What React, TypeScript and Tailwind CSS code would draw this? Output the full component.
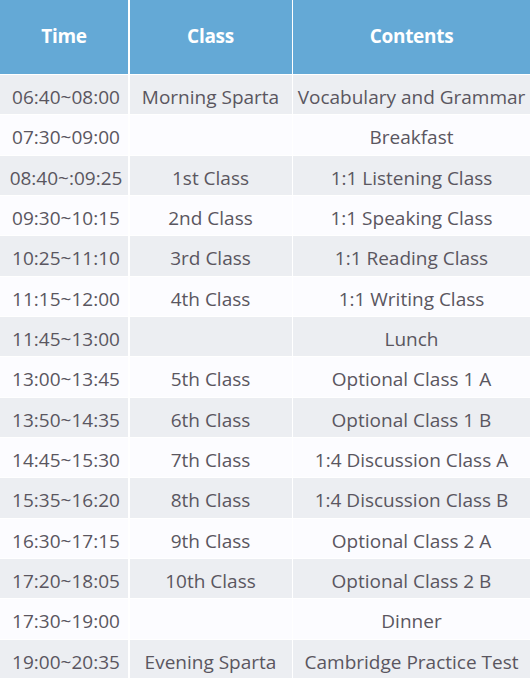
import React from "react";

const rows: [string, string, string][] = [
  ["06:40~08:00", "Morning Sparta", "Vocabulary and Grammar"],
  ["07:30~09:00", "", "Breakfast"],
  ["08:40~:09:25", "1st Class", "1:1 Listening Class"],
  ["09:30~10:15", "2nd Class", "1:1 Speaking Class"],
  ["10:25~11:10", "3rd Class", "1:1 Reading Class"],
  ["11:15~12:00", "4th Class", "1:1 Writing Class"],
  ["11:45~13:00", "", "Lunch"],
  ["13:00~13:45", "5th Class", "Optional Class 1 A"],
  ["13:50~14:35", "6th Class", "Optional Class 1 B"],
  ["14:45~15:30", "7th Class", "1:4 Discussion Class A"],
  ["15:35~16:20", "8th Class", "1:4 Discussion Class B"],
  ["16:30~17:15", "9th Class", "Optional Class 2 A"],
  ["17:20~18:05", "10th Class", "Optional Class 2 B"],
  ["17:30~19:00", "", "Dinner"],
  ["19:00~20:35", "Evening Sparta", "Cambridge Practice Test"],
];

export default function App() {
  return (
    <div
      className="w-[530px] h-[678px] overflow-hidden bg-white"
      style={{ fontFamily: '"Open Sans", "Noto Sans", sans-serif' }}
    >
      <div className="grid grid-cols-[128px_162px_1fr] gap-x-[1.5px] bg-white">
        {["Time", "Class", "Contents"].map((h) => (
          <div
            key={h}
            className="h-[74px] flex items-center justify-center bg-[#64a9d6] text-white font-bold text-[19px] tracking-[-0.3px] pb-[2px]"
          >
            {h}
          </div>
        ))}
      </div>
      <div className="mt-px flex flex-col gap-px">
        {rows.map((r, i) => (
          <div
            key={i}
            className="grid grid-cols-[128px_162px_1fr] gap-x-[1.5px] bg-white"
          >
            {r.map((c, j) => (
              <div
                key={j}
                className={`h-[39.35px] pt-[5px] flex items-center justify-center whitespace-nowrap text-[19px] text-[#5a5660] ${
                  j === 0 ? "pl-[4px]" : ""
                } ${i % 2 === 0 ? "bg-[#eceef2]" : "bg-[#fcfcff]"}`}
              >
                {c}
              </div>
            ))}
          </div>
        ))}
      </div>
    </div>
  );
}
